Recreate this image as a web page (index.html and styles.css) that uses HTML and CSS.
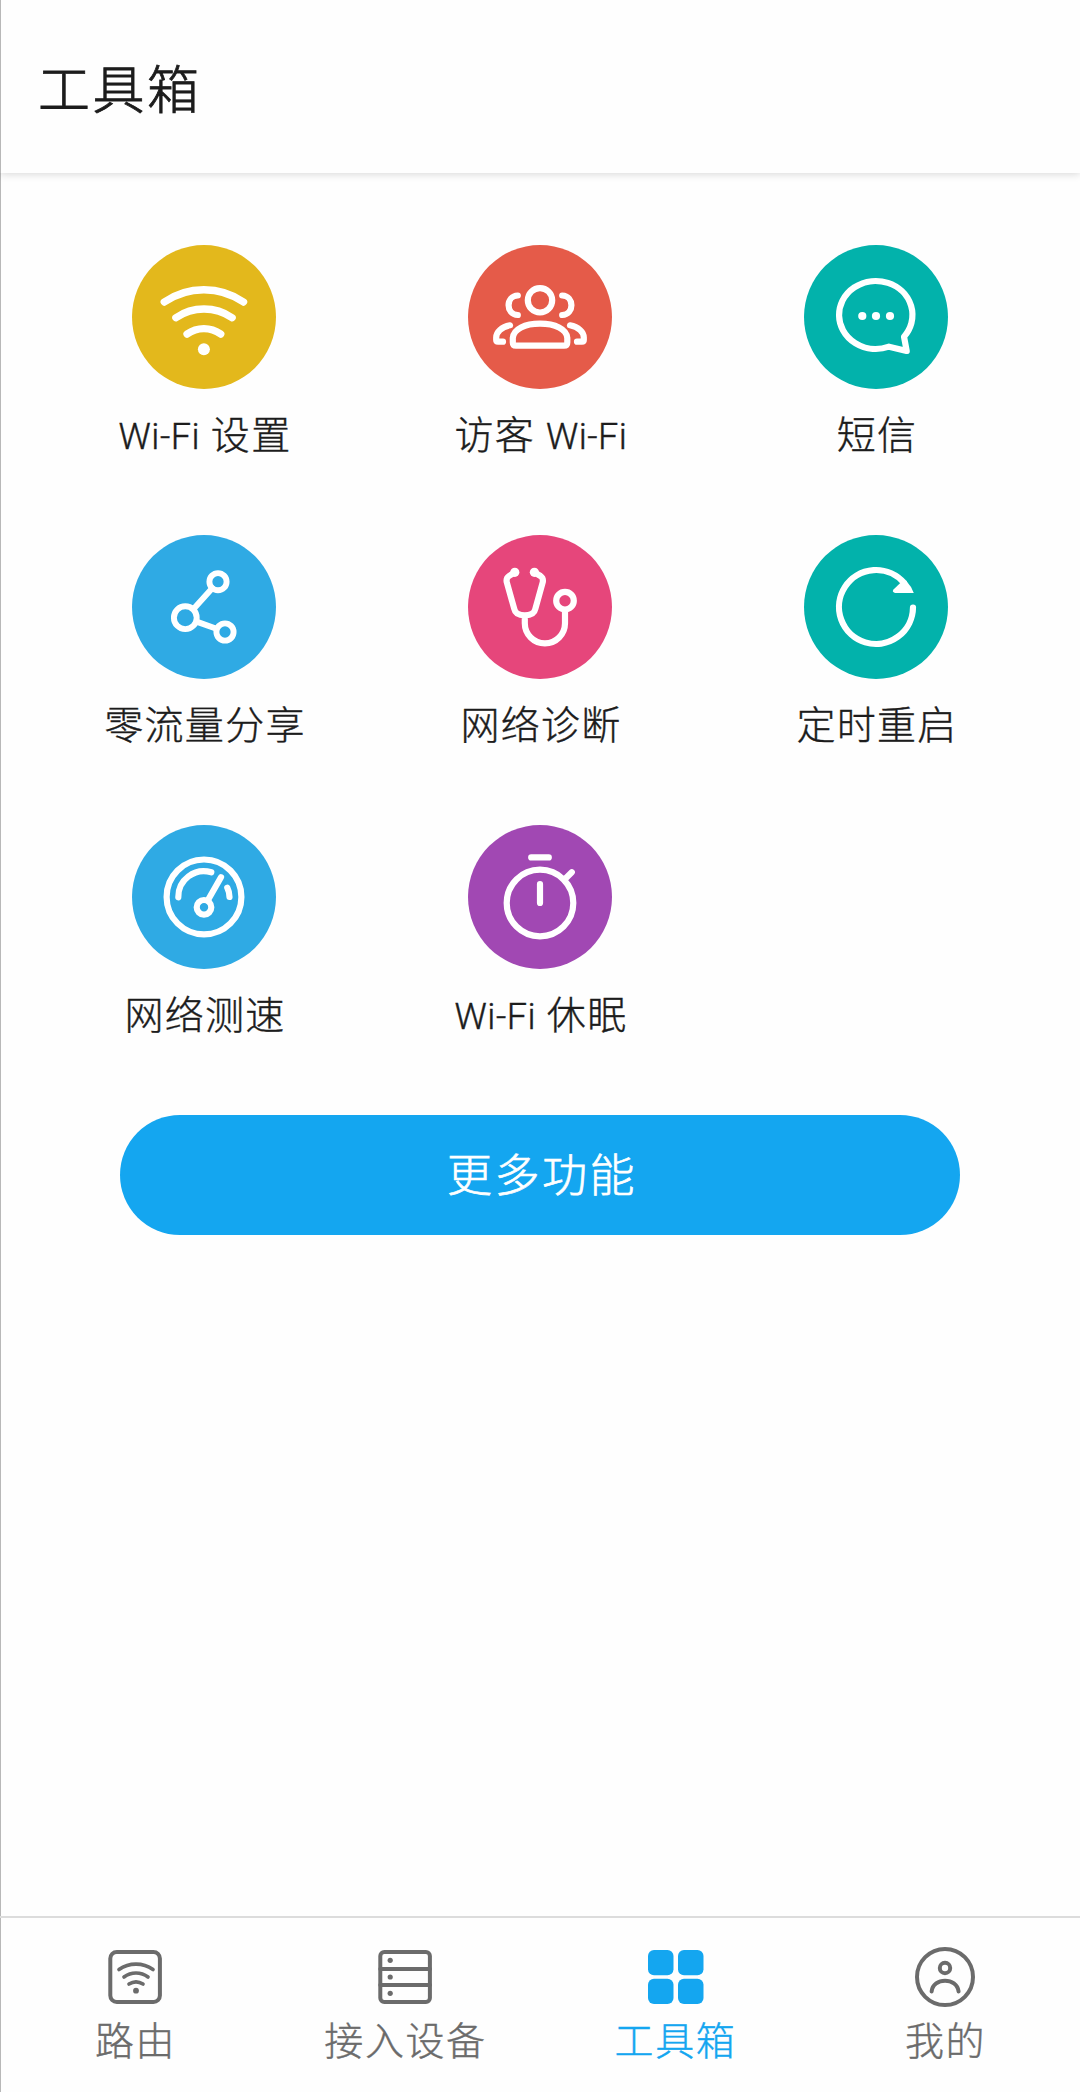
FILE: index.html
```html
<!DOCTYPE html>
<html lang="zh-CN">
<head>
<meta charset="utf-8">
<title>工具箱</title>
<link rel="stylesheet" href="styles.css">
</head>
<body>
<div class="app">
  <header class="header"><h1 class="title">工具箱</h1></header>
  <main class="main">
    <div class="tools">
      <div class="tool">
        <svg class="tool-icon yellow" viewBox="0 0 144 144"><g stroke-width="7.4"><path d="M32.3 57A70 70 0 0 1 111.5 57M43.9 72.7A50 50 0 0 1 100.1 72.7M55.1 89A29 29 0 0 1 88.7 89"/></g><circle class="fill" cx="71.9" cy="104.3" r="6"/></svg>
        <span class="label"><span class="latin">Wi-Fi</span> 设置</span>
      </div>
      <div class="tool">
        <svg class="tool-icon red" viewBox="0 0 144 144"><circle cx="72" cy="55.3" r="12.2"/><path d="M44.8 97.5V93C45.5 84 57 78.7 72 78.7S98.7 84 99.3 93V97.5Q99.3 100.7 96 100.7H48Q44.8 100.7 44.8 97.5ZM49.8 50.5C37.5 51 37.5 69.5 49.8 70M94.2 50.5C106.5 51 106.5 69.5 94.2 70M42 80.3C33.5 82 28.2 87 28.2 92.5V95Q28.2 96.7 30 96.7H35M102 80.3C110.5 82 115.8 87 115.8 92.5V95Q115.8 96.7 114 96.7H109"/></svg>
        <span class="label">访客 <span class="latin">Wi-Fi</span></span>
      </div>
      <div class="tool">
        <svg class="tool-icon teal" viewBox="0 0 144 144"><path d="M100 91.7L102.7 106L85 101.7A36.7 34 0 1 1 100 91.7Z"/><circle class="fill" cx="58.3" cy="71" r="4.1"/><circle class="fill" cx="72" cy="71" r="4.1"/><circle class="fill" cx="86" cy="71" r="4.1"/></svg>
        <span class="label">短信</span>
      </div>
      <div class="tool">
        <svg class="tool-icon blue" viewBox="0 0 144 144"><g stroke-width="5.9"><circle cx="86" cy="46.7" r="8.6"/><circle cx="53.3" cy="82.7" r="11.4"/><circle cx="93" cy="97" r="8.6"/><path d="M61.5 74L80.2 53.2M64.5 86.6L84.5 93.8"/></g></svg>
        <span class="label">零流量分享</span>
      </div>
      <div class="tool">
        <svg class="tool-icon pink" viewBox="0 0 144 144"><path d="M46.8 37.3L41 41Q38 43 38.7 47L46.3 74Q47.5 80.3 56.8 80.3T67.3 74L74.8 47Q75.5 43 72.5 41L66.4 37.3M56.8 81V88.3A20.1 20.1 0 0 0 97 88.3V75"/><circle cx="97" cy="65.7" r="8.8"/><circle class="fill" cx="46.8" cy="37.3" r="4.6"/><circle class="fill" cx="66.4" cy="37.3" r="4.6"/></svg>
        <span class="label">网络诊断</span>
      </div>
      <div class="tool">
        <svg class="tool-icon teal" viewBox="0 0 144 144"><path d="M109 72.5A37 37 0 1 1 100 47.8"/><path class="fill" d="M96 48.3L102 45.5Q107.5 51.5 109.8 57.9H91Q87.5 57 89.5 54.5Z"/></svg>
        <span class="label">定时重启</span>
      </div>
      <div class="tool">
        <svg class="tool-icon blue" viewBox="0 0 144 144"><circle cx="72" cy="71.9" r="37.4"/><path d="M46.3 72.3A25.6 25.6 0 0 1 79.3 47.3M95.3 62.8Q97.3 66.5 97.5 72M76.3 74.5L89 52.3"/><circle cx="72" cy="82.3" r="7.3"/></svg>
        <span class="label">网络测速</span>
      </div>
      <div class="tool">
        <svg class="tool-icon purple" viewBox="0 0 144 144"><circle cx="72" cy="78" r="33.3"/><path d="M63.2 32.4H80.8M97 54L103.8 47.2M72 59.2V78"/></svg>
        <span class="label"><span class="latin">Wi-Fi</span> 休眠</span>
      </div>
    </div>
    <button class="more">更多功能</button>
  </main>
  <nav class="tabs">
    <div class="tab">
      <svg class="tab-icon" viewBox="0 0 60 60"><rect x="5.3" y="5" width="49.6" height="50" rx="6.5"/><path d="M14 22.5A29.7 29.7 0 0 1 48 22.5M19 30A20 20 0 0 1 43 30M24 37A13 13 0 0 1 38 37" stroke-width="3.7"/><circle class="solid" cx="31" cy="43.7" r="2.9"/></svg>
      <span class="tab-label">路由</span>
    </div>
    <div class="tab">
      <svg class="tab-icon" viewBox="0 0 60 60"><rect x="5.3" y="5" width="49.6" height="50" rx="4"/><path d="M5.3 22H54.9M5.3 38H54.9"/><circle class="solid" cx="15.2" cy="13.3" r="2.6"/><circle class="solid" cx="15.2" cy="30" r="2.6"/><circle class="solid" cx="15.2" cy="46.3" r="2.6"/></svg>
      <span class="tab-label">接入设备</span>
    </div>
    <div class="tab active">
      <svg class="tab-icon" viewBox="0 0 60 60"><g class="solid"><rect x="3" y="3" width="25.5" height="25.3" rx="6"/><rect x="33" y="3" width="25.5" height="25.3" rx="6"/><rect x="3" y="31.7" width="25.5" height="25.3" rx="6"/><rect x="33" y="31.7" width="25.5" height="25.3" rx="6"/></g></svg>
      <span class="tab-label">工具箱</span>
    </div>
    <div class="tab">
      <svg class="tab-icon" viewBox="0 0 60 60"><circle cx="30" cy="30" r="28"/><circle cx="30" cy="21" r="5.2"/><path d="M16.6 44.5C18 30 42 30 43.6 44.5"/></svg>
      <span class="tab-label">我的</span>
    </div>
  </nav>
</div>
</body>
</html>
```
FILE: styles.css
```css
* { box-sizing: border-box; }
body { margin: 0; background: #fefefe; }
.app {
  height: 2092px;
  display: flex;
  flex-direction: column;
  box-shadow: inset 1px 0 #b8b8b8;
  font-family: Roboto, "Noto Sans CJK SC", sans-serif;
  font-weight: 300;
  color: #1c1c1c;
  -webkit-text-stroke: .4px currentColor;
}
.header {
  height: 173px;
  padding: 10px 0 0 38px;
  display: flex;
  align-items: center;
  box-shadow: inset 1px 0 #b8b8b8, 0 1px 8px rgba(0, 0, 0, .16);
}
.title {
  margin: 0;
  font-size: 52px;
  font-weight: 300;
  line-height: 70px;
  letter-spacing: 2.5px;
  -webkit-text-stroke-width: .8px;
}
.main { flex: 1; padding: 72px 36px 0; }
.tools {
  display: grid;
  grid-template-columns: repeat(3, 336px);
  grid-auto-rows: 290px;
}
.tool { display: flex; flex-direction: column; align-items: center; }
.tool-icon {
  width: 144px;
  height: 144px;
  border-radius: 50%;
  fill: none;
  stroke: #fff;
  stroke-width: 6.2;
  stroke-linecap: round;
  stroke-linejoin: round;
}
.tool-icon .fill { fill: #fff; stroke: none; }
.yellow { background: #e3b81c; }
.red { background: #e55b49; }
.teal { background: #02b2ab; }
.blue { background: #2faae4; }
.pink { background: #e6467b; }
.purple { background: #a148b3; }
.label {
  margin-top: 22px;
  padding-left: 2px;
  font-size: 39px;
  line-height: 50px;
  letter-spacing: 1.3px;
  white-space: nowrap;
}
.latin { font-size: 36px; letter-spacing: .5px; }
.more {
  display: block;
  width: 840px;
  height: 120px;
  margin: 0 auto;
  padding: 0 0 6px 4px;
  border: 0;
  border-radius: 60px;
  background: #14a6f0;
  color: #fff;
  font: inherit;
  font-size: 45px;
  letter-spacing: 2.5px;
  -webkit-text-stroke: .7px currentColor;
}
.tabs {
  height: 176px;
  padding-top: 29px;
  border-top: 2px solid #dcdcdc;
  display: grid;
  grid-template-columns: repeat(4, 1fr);
}
.tab { display: flex; flex-direction: column; align-items: center; color: #6b6b6b; }
.tab.active { color: #14a6f0; }
.tab-icon {
  width: 60px;
  height: 60px;
  fill: none;
  stroke: currentColor;
  stroke-width: 4;
  stroke-linecap: round;
}
.tab-icon .solid { fill: currentColor; stroke: none; }
.tab-label { margin-top: 10px; padding-left: 1px; font-size: 39px; line-height: 50px; letter-spacing: 1.6px; -webkit-text-stroke: .4px currentColor; }
```
